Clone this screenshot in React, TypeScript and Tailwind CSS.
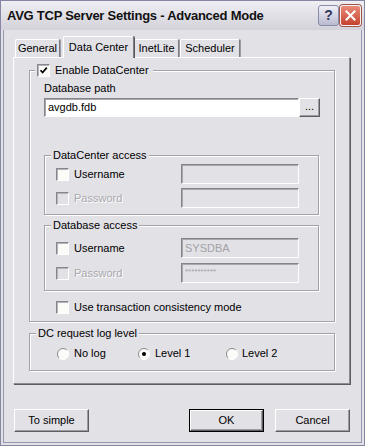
import type { ReactNode } from 'react'

const face = "font-['Liberation_Sans',Arial,sans-serif]"
const dimText = 'text-[#a9a8ad] [text-shadow:1px_1px_0_#ffffff]'
const groupBox = 'border border-[#a3a2a8] shadow-[inset_1px_1px_0_#fff,1px_1px_0_#fff]'

function CheckBox({ checked = false, disabled = false }: { checked?: boolean; disabled?: boolean }) {
  return (
    <span
      className={`flex h-[13px] w-[13px] shrink-0 items-center justify-center border border-t-[#87868c] border-l-[#87868c] border-b-white border-r-white shadow-[inset_1px_1px_0_#b4b3b9] ${
        disabled ? 'bg-[#e2e1e6]' : 'bg-[#fbfbf8]'
      }`}
    >
      {checked && (
        <svg width="9" height="9" viewBox="0 0 9 9">
          <path d="M1.5 4.2 L3.6 6.5 L7.8 1.6" fill="none" stroke="#000" strokeWidth="1.7" />
        </svg>
      )}
    </span>
  )
}

function Radio({ checked = false }: { checked?: boolean }) {
  return (
    <svg width="12" height="12" viewBox="0 0 12 12" className="shrink-0">
      <circle cx="6" cy="6" r="5.5" fill="#fbfbf8" />
      <path d="M2.1 9.9 A5.5 5.5 0 0 1 9.9 2.1" fill="none" stroke="#8a898f" strokeWidth="1" />
      <path d="M9.9 2.1 A5.5 5.5 0 0 1 2.1 9.9" fill="none" stroke="#ffffff" strokeWidth="1" />
      {checked && <circle cx="6" cy="6" r="2" fill="#000" />}
    </svg>
  )
}

function Field({ value, disabled = false, small = false, className = '' }: { value?: string; disabled?: boolean; small?: boolean; className?: string }) {
  return (
    <div
      className={`flex items-center border border-t-[#85848a] border-l-[#85848a] border-b-white border-r-white pl-[3px] shadow-[inset_1px_1px_0_#a8a7ad] ${
        disabled ? 'bg-[#e2e1e6] text-[#a3a2a7]' : 'bg-white text-black'
      } ${small ? 'text-[8px] leading-[8px] pb-[3px]' : 'text-[11px]'} ${className}`}
    >
      {value}
    </div>
  )
}

function Btn({ children, isDefault = false }: { children: ReactNode; isDefault?: boolean }) {
  const raised =
    'flex h-full w-full items-center justify-center border border-t-white border-l-white border-b-[#5e5d63] border-r-[#5e5d63] shadow-[inset_-1px_-1px_0_#9c9ba1] bg-[#e2e1e6] text-[11px] text-black'
  if (isDefault) {
    return (
      <div className="h-[23px] w-[75px] border border-black">
        <div className={raised}>{children}</div>
      </div>
    )
  }
  return (
    <div className="h-[23px] w-[75px]">
      <div className={raised}>{children}</div>
    </div>
  )
}

function Tab({ label, width, active = false, className = '' }: { label: string; width: number; active?: boolean; className?: string }) {
  return (
    <div
      style={{ width }}
      className={`flex items-center justify-center rounded-t-[2px] border-l border-t border-r border-l-white border-t-white border-r-[#7c7b81] bg-[#e2e1e6] text-[11px] text-black ${
        active ? 'relative z-10 -mb-px h-[22px] shadow-[1px_0_0_#5a5960]' : 'h-[18px] shadow-[1px_0_0_#9c9ba1]'
      } ${className}`}
    >
      {label}
    </div>
  )
}

function AccessGroup({ title, user, pass, className = '', rowGap, topGap, bottom }: {
  title: string
  user?: string
  pass?: string
  className?: string
  rowGap: string
  topGap: string
  bottom: string
}) {
  return (
    <fieldset className={`w-[275px] ${groupBox} ${bottom} ${className}`}>
      <legend className="ml-[6px] bg-[#e2e1e6] px-[2px] text-[11px] leading-[13px] text-black">{title}</legend>
      <div className="pl-[11px]">
        <div className={`flex h-[20px] items-center ${topGap}`}>
          <div className="flex w-[125px] items-center gap-[5px]">
            <CheckBox />
            <span className="text-[11px] text-black">Username</span>
          </div>
          <Field value={user} disabled className="h-[20px] w-[118px]" />
        </div>
        <div className={`flex h-[20px] items-center ${rowGap}`}>
          <div className="flex w-[125px] items-center gap-[5px]">
            <CheckBox disabled />
            <span className={`text-[11px] ${dimText}`}>Password</span>
          </div>
          <Field value={pass} disabled small={!!pass} className="h-[20px] w-[118px]" />
        </div>
      </div>
    </fieldset>
  )
}

export default function App() {
  return (
    <div className={`flex h-[446px] w-[365px] flex-col border border-[#8586a3] bg-[#e2e1e6] ${face}`}>
      {/* title bar */}
      <div className="flex h-[29px] shrink-0 items-center bg-linear-to-b from-[#efeef3] to-[#d3d2da] pl-[6px] pr-[3px]">
        <span className="text-[13px] font-bold tracking-[-0.25px] text-[#111111]">AVG TCP Server Settings - Advanced Mode</span>
        <div className="ml-auto flex h-[21px] w-[21px] items-center justify-center rounded-[3px] border border-[#8a8bab] bg-linear-to-b from-[#f1f1f8] to-[#b9bad0] text-[14px] font-bold text-[#34375a]">
          ?
        </div>
        <div className="ml-[1px] flex h-[21px] w-[21px] items-center justify-center rounded-[3px] border border-[#f3f1f1] bg-linear-to-b from-[#e98b79] to-[#c4402e] shadow-[0_0_0_1px_#a05548]">
          <svg width="11" height="11" viewBox="0 0 11 11">
            <path d="M1.5 1.5 L9.5 9.5 M9.5 1.5 L1.5 9.5" stroke="#fff" strokeWidth="2" strokeLinecap="square" />
          </svg>
        </div>
      </div>

      {/* body */}
      <div className="mx-[2px] mb-[2px] flex-1 border border-t-0 border-[#9697b1] pl-[9px] pt-[6px]">
        <div className="flex h-[21px] items-end pl-[2px]">
          <Tab label="General" width={45} />
          <Tab label="Data Center" width={71} active className="ml-[3px]" />
          <Tab label="InetLite" width={45} />
          <Tab label="Scheduler" width={60} className="ml-[1px]" />
        </div>

        <div className="h-[327px] w-[337px] border border-t-white border-l-white border-b-[#8d8c92] border-r-[#8d8c92] shadow-[1px_1px_0_#5e5d63] pl-[15px] pt-[6px]">
          {/* Enable DataCenter */}
          <fieldset className={`w-[306px] pb-[7px] ${groupBox}`}>
            <legend className="ml-[5px] flex items-center gap-[5px] bg-[#e2e1e6] pl-[2px] pr-[4px] text-[11px] leading-[13px] text-black">
              <CheckBox checked />
              <span>Enable DataCenter</span>
            </legend>
            <div className="pl-[14px]">
              <div className="mt-[5px] h-[13px] text-[11px] leading-[13px] text-black">Database path</div>
              <div className="mt-[3px] flex">
                <Field value="avgdb.fdb" className="h-[19px] w-[255px]" />
                <div className="h-[19px] w-[21px]">
                  <div className="flex h-full w-full items-center justify-center border border-t-white border-l-white border-b-[#5e5d63] border-r-[#5e5d63] bg-[#e2e1e6] pb-[3px] text-[11px] text-black shadow-[inset_-1px_-1px_0_#9c9ba1]">
                    ...
                  </div>
                </div>
              </div>

              <AccessGroup title="DataCenter access" className="mt-[32px]" topGap="mt-[2px]" rowGap="mt-[4px]" bottom="pb-[6px]" />
              <AccessGroup
                title="Database access"
                user="SYSDBA"
                pass="**********"
                className="mt-[4px]"
                topGap="mt-[6px]"
                rowGap="mt-[5px]"
                bottom="pb-[7px]"
              />

              <div className="mt-[10px] flex h-[13px] items-center gap-[5px] pl-[12px]">
                <CheckBox />
                <span className="text-[11px] text-black">Use transaction consistency mode</span>
              </div>
            </div>
          </fieldset>

          {/* log level */}
          <fieldset className={`mt-[5px] w-[306px] pb-[10px] ${groupBox}`}>
            <legend className="ml-[6px] bg-[#e2e1e6] px-[2px] text-[11px] leading-[13px] text-black">DC request log level</legend>
            <div className="mt-[7px] flex h-[13px] items-center pl-[27px] text-[11px] text-black">
              <div className="flex w-[81px] items-center gap-[5px]">
                <Radio />
                <span>No log</span>
              </div>
              <div className="flex w-[88px] items-center gap-[5px]">
                <Radio checked />
                <span>Level 1</span>
              </div>
              <div className="flex items-center gap-[4px]">
                <Radio />
                <span>Level 2</span>
              </div>
            </div>
          </fieldset>
        </div>

        <div className="mt-[25px] flex w-[337px] pl-[1px]">
          <Btn>To simple</Btn>
          <div className="ml-auto">
            <Btn isDefault>OK</Btn>
          </div>
          <div className="ml-[11px]">
            <Btn>Cancel</Btn>
          </div>
        </div>
      </div>
    </div>
  )
}
